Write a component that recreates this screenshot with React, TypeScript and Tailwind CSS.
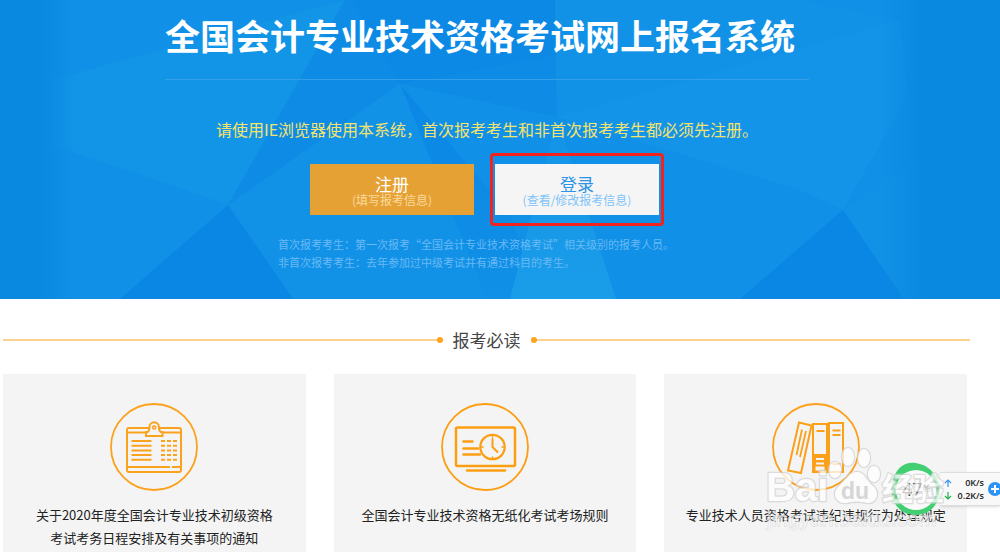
import type { ReactNode } from "react";

const notices: { title: string[]; icon: ReactNode }[] = [
  {
    title: ["关于2020年度全国会计专业技术初级资格", "考试考务日程安排及有关事项的通知"],
    icon: <ScheduleIcon />,
  },
  {
    title: ["全国会计专业技术资格无纸化考试考场规则"],
    icon: <ScreenIcon />,
  },
  {
    title: ["专业技术人员资格考试违纪违规行为处理规定"],
    icon: <BooksIcon />,
  },
];

function ScheduleIcon() {
  return (
    <svg viewBox="0 0 88 88" className="size-[88px]" fill="none" stroke="#fba21d" strokeWidth="2" aria-hidden="true">
      <circle cx="44" cy="44" r="43" strokeWidth="1.8" />
      <rect x="17" y="25" width="54" height="44" rx="2" />
      <path d="M17 29.5H71M17 64H60M62 64H71" />
      <path d="M36 29h1.500q2-1 2-5a4.700 4.700 0 0 1 9.400 0q0 4 2 5H52.500v4H36z" fill="#f4f4f4" />
      <circle cx="44.200" cy="24.500" r="1.600" strokeWidth="1.500" />
      <path d="M21.500 38H41.500M21.500 42.700H41.500M21.500 47.400H41.500M21.500 52.100H41.500M21.500 56.800H41.500" />
      <path d="M51 38H67M51 42.700H67M51 47.400H67M51 52.100H67M51 56.800H67" strokeDasharray="4 2" />
    </svg>
  );
}

function ScreenIcon() {
  return (
    <svg viewBox="0 0 88 88" className="size-[88px]" fill="none" stroke="#fc9e12" strokeWidth="2.500" strokeLinecap="round" aria-hidden="true">
      <circle cx="44" cy="44" r="43" strokeWidth="1.800" />
      <rect x="15" y="24.500" width="59" height="38.500" rx="1.500" />
      <path d="M26 67.500H64M22.500 38.500H31.500M22.500 45.500H37M22.500 51.500H39" />
      <circle cx="51.500" cy="44" r="12.200" strokeWidth="2.200" />
      <path d="M51.500 36V44L56.500 49" strokeWidth="2" />
      <path d="M51.500 32.500v1.500M51.500 54v1.500M40.500 44H42M61 44h1.500" strokeWidth="1.500" />
    </svg>
  );
}

function BooksIcon() {
  return (
    <svg viewBox="0 0 88 88" className="size-[88px]" fill="none" stroke="#fca01a" strokeWidth="2" aria-hidden="true">
      <circle cx="44" cy="44" r="43" strokeWidth="1.800" />
      <path d="M27 19.500L39.500 22.500L29 70L16 67.500Z" />
      <path d="M30 26.500L24.500 52M34 28L28 54" strokeWidth="1.800" />
      <rect x="41" y="21" width="14" height="48" />
      <rect x="57" y="20" width="14" height="49" />
      <path d="M44.500 28H52.500M60.500 27.500H68.500M60.500 32H68.500M60.500 61H68.500" />
      <path d="M40 51H56V70H40z" fill="#fca01a" stroke="none" />
      <path d="M44 56H52M44 60.500H52" stroke="#f4f4f4" strokeWidth="1.800" />
      <rect x="43.500" y="63.500" width="9" height="4" fill="#f4f4f4" stroke="none" />
    </svg>
  );
}

function HeroBackground() {
  return (
    <svg
      viewBox="0 0 1000 299"
      preserveAspectRatio="none"
      className="absolute inset-0 -z-10 h-full w-full"
      aria-hidden="true"
    >
      <defs>
        <linearGradient id="edges">
          <stop offset="0" stopColor="#0a89e1" />
          <stop offset="0.040" stopColor="#0a89e1" />
          <stop offset="0.075" stopColor="#0a89e1" stopOpacity="0" />
          <stop offset="0.880" stopColor="#0a89e1" stopOpacity="0" />
          <stop offset="0.925" stopColor="#0a89e1" />
          <stop offset="1" stopColor="#0a89e1" />
        </linearGradient>
        <linearGradient id="fold" x1="0" y1="0" x2="0" y2="1">
          <stop offset="0" stopColor="#0b86e5" />
          <stop offset="1" stopColor="#1090e6" />
        </linearGradient>
        <linearGradient id="wedge" x1="0" y1="0" x2="0" y2="1">
          <stop offset="0" stopColor="#1393e7" />
          <stop offset="1" stopColor="#1a9de9" />
        </linearGradient>
      </defs>
      <rect width="1000" height="299" fill="#1090e7" />
      <path d="M50 80L345 0L228 205L150 178L50 145Z" fill="#1294e7" />
      <path d="M345 0H555L557 117L400 84L228 205Z" fill="#0e8be5" />
      <path d="M352 0H555V55L400 84Z" fill="#0c88e5" />
      <path d="M400 84L557 117L510 299H487Z" fill="#1090e7" />
      <path d="M400 84L510 215L540 299H487Z" fill="url(#fold)" />
      <path d="M400 84L228 205L293 299H487Z" fill="#1292e7" />
      <path d="M228 205L120 299H293Z" fill="#0a86e5" />
      <path d="M555 0H800L900 20L557 117Z" fill="#1192e7" />
      <path d="M557 117L900 20L908 95L843 210L800 190Z" fill="#1394e8" />
      <path d="M557 117L510 299H616Z" fill="url(#wedge)" />
      <path d="M843 210L740 299H904Z" fill="#0a86e5" />
      <path d="M843 210L920 158V299H904Z" fill="#1292e6" />
      <rect width="1000" height="299" fill="url(#edges)" />
    </svg>
  );
}

function Hero() {
  return (
    <header className="relative isolate flex flex-col items-center pr-[26px] pb-7">
      <HeroBackground />
      <h1 className="w-[644px] border-b border-[#359fea] pt-2.5 pb-[19px] text-[35px] leading-[50px] font-bold text-white">
        全国会计专业技术资格考试网上报名系统
      </h1>
      <p className="mt-[37px] text-[16px] leading-6 text-[#f3e36f]">
        请使用IE浏览器使用本系统，首次报考考生和非首次报考考生都必须先注册。
      </p>
      <div className="mt-3 flex items-center gap-4">
        <button className="h-[51px] w-[164px] bg-[#e5a134] text-[#fbd99c]">
          <span className="block text-[17px] leading-5 text-white">注册</span>
          <span className="block text-[12px] leading-3">(填写报考信息)</span>
        </button>
        <div className="rounded-sm border-3 border-[#f4221c] px-0.5 py-2">
          <button className="block h-[51px] w-[164px] bg-[#f5f5f5] text-[#7fc4f8]">
            <span className="block text-[17px] leading-5 text-[#2d93e6]">登录</span>
            <span className="block text-[12px] leading-3">(查看/修改报考信息)</span>
          </button>
        </div>
      </div>
      <div className="mt-[9px] w-[418px] text-[11px] leading-[18px] text-[#69b9f5]">
        <p>首次报考考生：第一次报考“全国会计专业技术资格考试”相关级别的报考人员。</p>
        <p>非首次报考考生：去年参加过中级考试并有通过科目的考生。</p>
      </div>
    </header>
  );
}

function SpeedWidget() {
  return (
    <aside className="absolute top-[461px] right-0 flex items-center font-['Open_Sans',sans-serif] text-[9px] font-semibold text-[#222222]">
      <div className="relative z-10 -mr-1 size-14">
        <svg viewBox="0 0 56 56" className="size-14" aria-hidden="true">
          <path d="M4 24C6 8 16 0 28 2C39 4 43 9 47 14C58 30 49 53 29 54C11 55 1 39 4 24Z" fill="#42cf72" />
          <circle cx="28" cy="29" r="20" fill="#fafafa" />
        </svg>
        <span className="absolute inset-0 flex items-center justify-center text-[18px] font-normal text-[#333333]">
          47<small className="text-[9px]">%</small>
        </span>
      </div>
      <div className="flex h-[34px] items-center gap-1 border-y border-[#dddddd] bg-[#f8f8f8] pl-1 shadow-sm">
        <div className="w-10 leading-[13px]">
          <p className="flex items-center justify-between">
            <SpeedArrow className="size-2 text-[#3a96f5]" />
            0K/s
          </p>
          <p className="flex items-center justify-between">
            <SpeedArrow className="size-2 rotate-180 text-[#22b04c]" />
            0.2K/s
          </p>
        </div>
        <button aria-label="加速" className="-mr-0.5 size-3.5">
          <svg viewBox="0 0 14 14" className="size-3.5">
            <circle cx="7" cy="7" r="7" fill="#2e93f7" />
            <path d="M7 3V11M3 7H11" stroke="white" strokeWidth="2" />
          </svg>
        </button>
      </div>
    </aside>
  );
}

function SpeedArrow({ className }: { className: string }) {
  return (
    <svg viewBox="0 0 8 8" className={className} fill="none" stroke="currentColor" strokeWidth="1.2" aria-hidden="true">
      <path d="M4 8V1.500M1 4L4 1L7 4" />
    </svg>
  );
}

function Watermark() {
  return (
    <svg
      viewBox="0 0 190 90"
      className="pointer-events-none absolute top-[443px] right-[50px] z-20 h-[90px] w-[190px] opacity-75"
      fill="white"
      stroke="#d2d2d2"
      strokeWidth="2.500"
      strokeLinejoin="round"
      paintOrder="stroke"
      fontFamily="Liberation Sans, Noto Sans CJK SC, sans-serif"
      aria-hidden="true"
    >
      <text x="6" y="58" fontSize="40" fontWeight="700">Bai</text>
      <ellipse cx="75" cy="27" rx="6" ry="8" />
      <ellipse cx="88" cy="14" rx="6" ry="9" />
      <ellipse cx="104" cy="15" rx="6" ry="9" />
      <ellipse cx="114" cy="31" rx="6" ry="8" />
      <path d="M97 29C104 29 106 37 113 43C121 50 116 61 107 60C99 58 94 58 87 60C76 61 71 51 79 43C86 37 89 29 97 29Z" />
      <text x="81" y="56" fontSize="23" fontWeight="700" fill="#cccccc" stroke="none">du</text>
      <text x="122" y="57" fontSize="31" fontWeight="700">经验</text>
      <text x="7" y="83" fontSize="21" strokeWidth="1" fillOpacity="0.7">jingyan.baidu.com</text>
    </svg>
  );
}

export default function App() {
  return (
    <div className="relative h-screen overflow-hidden bg-white font-['Noto_Sans_CJK_SC',sans-serif]">
      <Hero />
      <main className="pr-[30px] pl-[3px]">
        <div className="flex items-center pt-[27px] pb-5">
          <span className="h-0.5 flex-1 bg-[#fbd28d]" />
          <span className="size-1.5 rounded-full bg-[#fba31c]" />
          <h2 className="px-2.5 text-[17px] leading-7 text-[#444444]">报考必读</h2>
          <span className="size-1.5 rounded-full bg-[#fba31c]" />
          <span className="h-0.5 flex-1 bg-[#fbd28d]" />
        </div>
        <div className="mr-[3px] grid grid-cols-3 gap-7">
          {notices.map((notice) => (
            <a
              key={notice.title[0]}
              href="#"
              className="flex h-60 flex-col items-center bg-[#f4f4f4] pt-[29px] text-center text-[13px] leading-[23px] text-[#222222]"
            >
              {notice.icon}
              <span className="mt-3">
                {notice.title.map((line) => (
                  <span key={line} className="block">{line}</span>
                ))}
              </span>
            </a>
          ))}
        </div>
      </main>
      <SpeedWidget />
      <Watermark />
    </div>
  );
}
